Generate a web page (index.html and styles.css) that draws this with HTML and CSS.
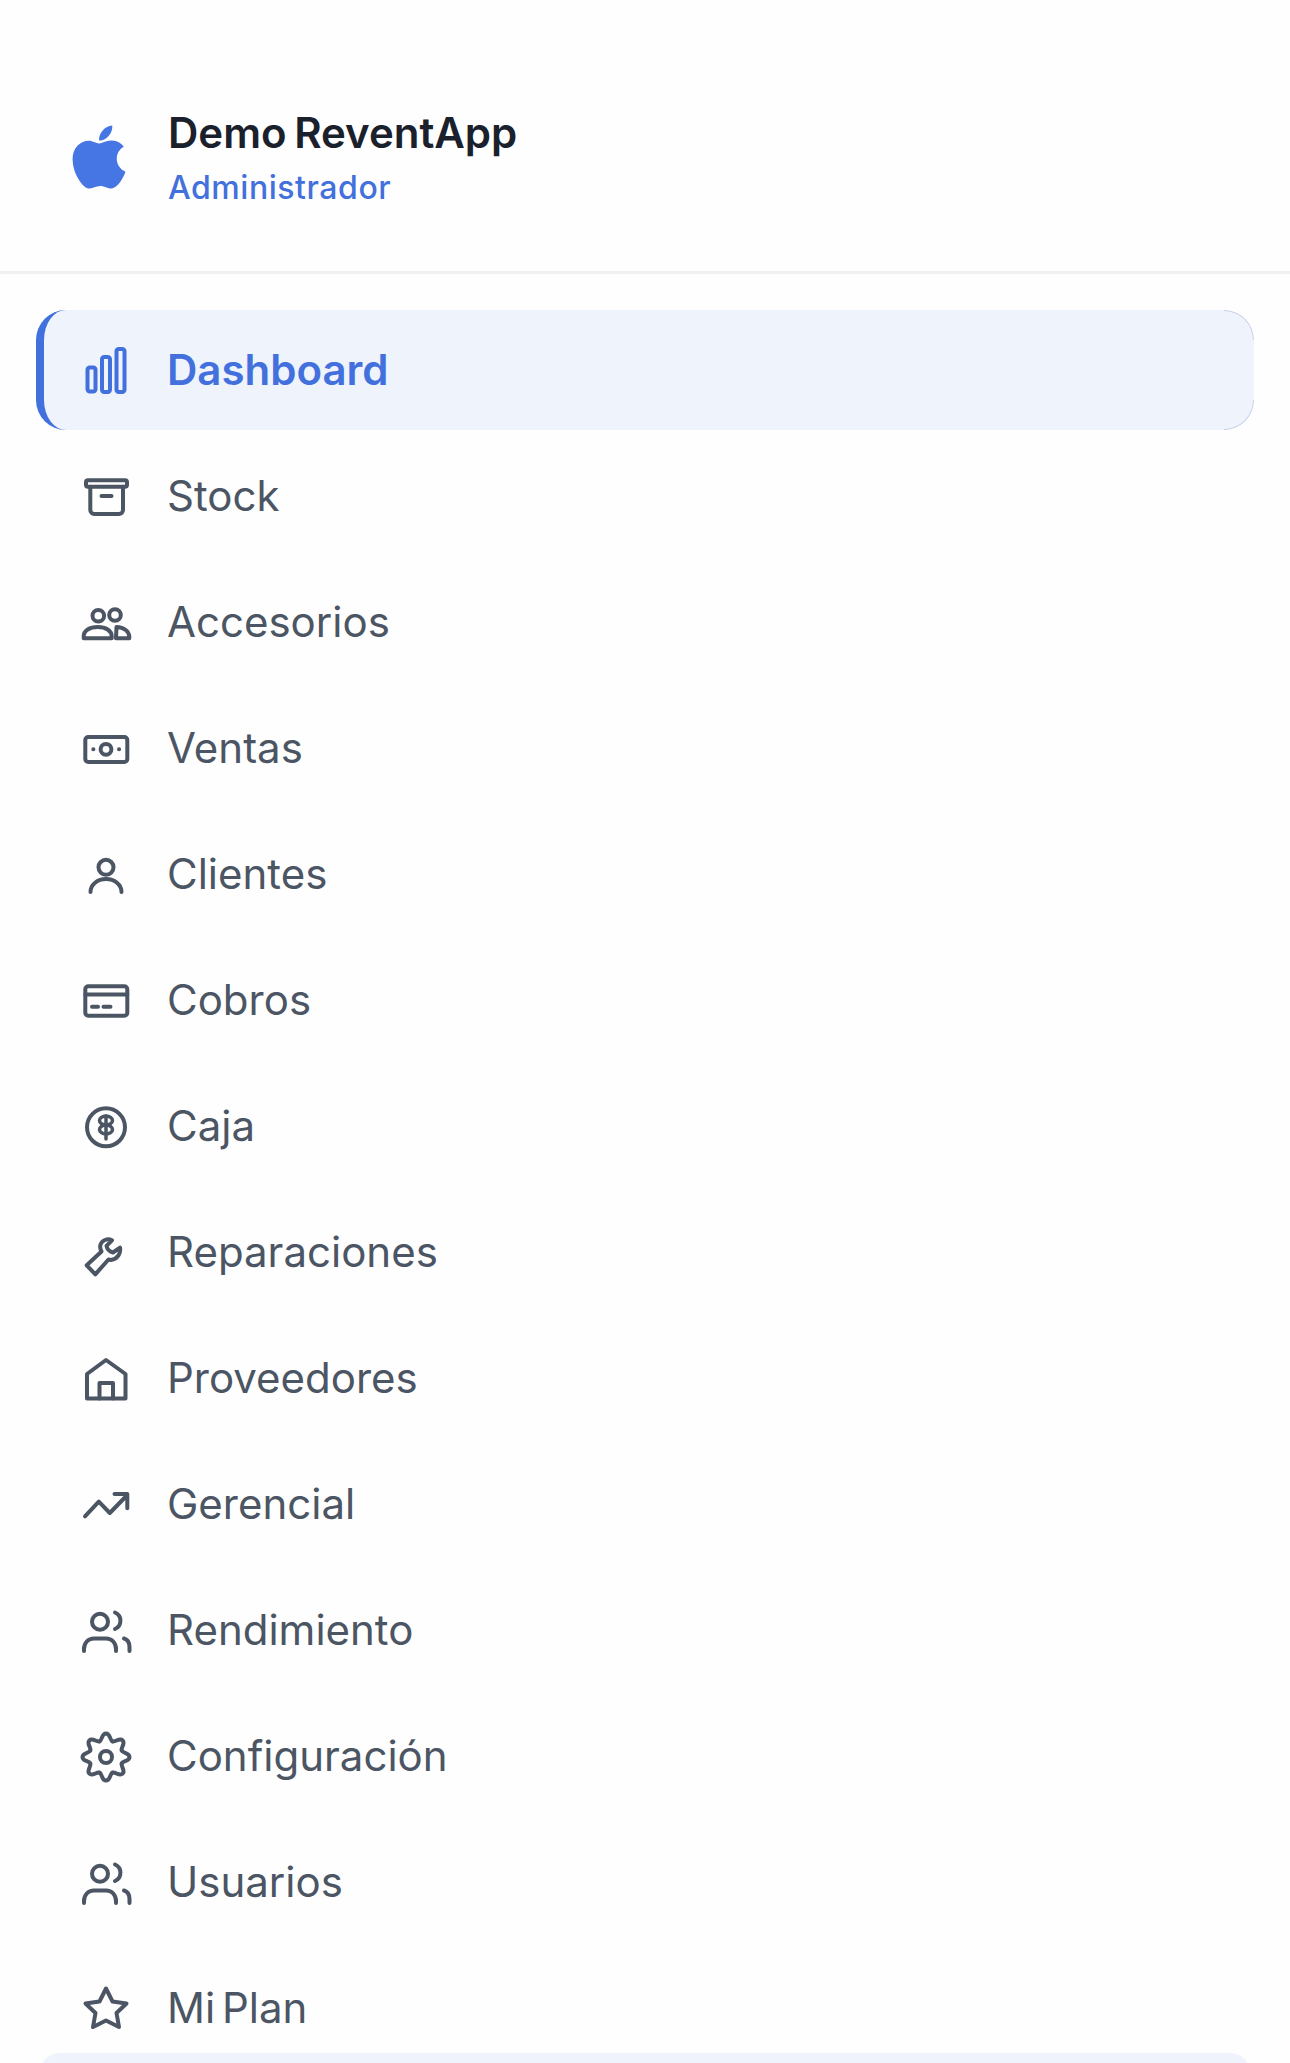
FILE: index.html
```html
<!DOCTYPE html>
<html lang="es">
<head>
<meta charset="utf-8">
<title>Demo ReventApp</title>
<link rel="stylesheet" href="styles.css">
</head>
<body>
<aside class="sidebar">
  <header class="brand">
    <svg class="brand-logo" viewBox="0 0 384 512" aria-hidden="true"><path d="M318.7 268.7c-.2-36.7 16.4-64.4 50-84.8-18.8-26.9-47.2-41.7-84.7-44.6-35.5-2.8-74.3 20.7-88.5 20.7-15 0-49.4-19.7-76.4-19.7C63.3 141.2 4 184.8 4 273.5q0 39.3 14.4 81.2c12.8 36.7 59 126.7 107.2 125.2 25.2-.6 43-17.9 75.8-17.9 31.8 0 48.3 17.9 76.4 17.9 48.6-.7 90.4-82.5 102.6-119.3-65.2-30.7-61.7-90-61.7-91.9zm-56.6-164.2c27.3-32.4 24.8-61.9 24-72.5-24.1 1.4-52 16.4-67.9 34.9-17.5 19.8-27.8 44.3-25.6 71.9 26.1 2 49.9-11.4 69.5-34.3z"/></svg>
    <div class="brand-text">
      <div class="brand-name">Demo ReventApp</div>
      <div class="brand-role">Administrador</div>
    </div>
  </header>
  <nav class="menu">
    <a class="item active">
      <svg class="ico" viewBox="0 0 54 54"><rect x="8.5" y="24.5" width="8" height="24" rx="2.2"/><rect x="23" y="14" width="8" height="35" rx="2.2"/><rect x="37.5" y="6" width="8" height="43" rx="2.2"/></svg>
      <span>Dashboard</span>
    </a>
    <a class="item">
      <svg class="ico" viewBox="0 0 54 54"><rect x="7" y="11.3" width="41" height="6.5" rx="2"/><path d="M11.3 17.8V41a4 4 0 0 0 4 4H40a4 4 0 0 0 4-4V17.8"/><path d="M22.5 27h10"/></svg>
      <span>Stock</span>
    </a>
    <a class="item">
      <svg class="ico" viewBox="0 0 54 54"><circle cx="19.3" cy="20.7" r="5.8"/><circle cx="36" cy="20" r="5.8"/><path d="M4.7 43.2v-1.7c0-6 6-9.5 14-9.5s14 3.5 14 9.500v1.700z"/><path d="M37.500 32c7.500.3 12.800 4.300 12.800 10v1.200H37z"/></svg>
      <span>Accesorios</span>
    </a>
    <a class="item">
      <svg class="ico" viewBox="0 0 54 54"><rect x="6.3" y="16" width="42" height="25" rx="3"/><circle cx="27" cy="28.3" r="5.4"/><path d="M14.3 28.3h.1M40 28.3h.1"/></svg>
      <span>Ventas</span>
    </a>
    <a class="item">
      <svg class="ico" viewBox="0 0 54 54"><circle cx="27" cy="20.3" r="7.5"/><path d="M11.5 45c0-7.500 7-13 15.500-13s15.500 5.500 15.500 13"/></svg>
      <span>Clientes</span>
    </a>
    <a class="item">
      <svg class="ico" viewBox="0 0 54 54"><rect x="6.300" y="13.300" width="42" height="29.400" rx="3"/><path d="M6.300 21.500h42M13 33.700h6M24.500 33.700h7"/></svg>
      <span>Cobros</span>
    </a>
    <a class="item">
      <svg class="ico" viewBox="0 0 54 54"><circle cx="27" cy="28.300" r="19"/><ellipse class="thin" cx="27" cy="21.500" rx="6.500" ry="4.500"/><ellipse class="thin" cx="27" cy="30.500" rx="6.500" ry="4.500"/><path class="thin" d="M27 17v23"/></svg>
      <span>Caja</span>
    </a>
    <a class="item">
      <svg class="ico" viewBox="0 0 54 54"><path d="M7.700 40.300 22.500 26.500C20 22 21 17 26 15c2.500-1 5-.7 7 .3l-5.500 5.500c.5 3.200 2.500 5.700 6.500 6.700l7-4.800c1 5.300-2 11.300-9 12.300l-2.500-.5-13.200 14.800z"/></svg>
      <span>Reparaciones</span>
    </a>
    <a class="item">
      <svg class="ico" viewBox="0 0 54 54"><path d="M8 47.500V23L27 9l19.500 14v24.500z"/><path d="M20.500 47.500V32H34v15.500"/></svg>
      <span>Proveedores</span>
    </a>
    <a class="item">
      <svg class="ico" viewBox="0 0 54 54"><path d="M6 39.300 19.800 24.700 30.800 36 48.300 18M35.500 17h12.800v14.300"/></svg>
      <span>Gerencial</span>
    </a>
    <a class="item">
      <svg class="ico" viewBox="0 0 54 54"><circle cx="21" cy="18.700" r="8"/><path d="M36 9.500a9 9 0 0 1 0 16.500"/><path d="M5 48v-2c0-6 4-10.500 10-10.500h12c6 0 10 4.500 10 10.500v2"/><path d="M45 35.500c3.500 1 5.500 4.500 5.500 8.500v4"/></svg>
      <span>Rendimiento</span>
    </a>
    <a class="item">
      <svg class="ico" viewBox="0 0 54 54"><circle cx="27" cy="28" r="6"/><g><path d="M20.500 12.300C23.300 11.200 22.500 4.500 27 4.500S30.700 11.200 33.500 12.300"/><path transform="rotate(45 27 28)" d="M20.500 12.300C23.300 11.200 22.500 4.500 27 4.500S30.700 11.200 33.500 12.300"/><path transform="rotate(90 27 28)" d="M20.500 12.300C23.300 11.200 22.500 4.500 27 4.500S30.700 11.200 33.500 12.300"/><path transform="rotate(135 27 28)" d="M20.500 12.300C23.300 11.200 22.500 4.500 27 4.500S30.700 11.200 33.500 12.300"/><path transform="rotate(180 27 28)" d="M20.500 12.300C23.300 11.200 22.500 4.500 27 4.500S30.700 11.200 33.500 12.300"/><path transform="rotate(225 27 28)" d="M20.500 12.300C23.300 11.200 22.500 4.500 27 4.500S30.700 11.200 33.500 12.300"/><path transform="rotate(270 27 28)" d="M20.500 12.300C23.300 11.200 22.500 4.500 27 4.500S30.700 11.200 33.500 12.300"/><path transform="rotate(315 27 28)" d="M20.500 12.300C23.300 11.200 22.500 4.500 27 4.500S30.700 11.200 33.500 12.300"/></g></svg>
      <span>Configuración</span>
    </a>
    <a class="item">
      <svg class="ico" viewBox="0 0 54 54"><circle cx="21" cy="18.700" r="8"/><path d="M36 9.500a9 9 0 0 1 0 16.500"/><path d="M5 48v-2c0-6 4-10.500 10-10.500h12c6 0 10 4.500 10 10.500v2"/><path d="M45 35.500c3.500 1 5.500 4.500 5.500 8.500v4"/></svg>
      <span>Usuarios</span>
    </a>
    <a class="item">
      <svg class="ico" viewBox="0 0 54 54"><path d="M27 7.500l6.500 13 14 2-10 9.500L40 46l-13-6.500L14 46l2.500-14-10-9.500 14-2z"/></svg>
      <span>Mi Plan</span>
    </a>
  </nav>
  <div class="footer-card"></div>
</aside>
</body>
</html>
```

FILE: styles.css
```css
html, body {
  margin: 0;
  padding: 0;
  height: 100%;
  overflow: hidden;
  background: #fefefe;
}

.sidebar {
  position: relative;
  height: 2063px;
  overflow: hidden;
  font-family: "Inter", "Liberation Sans", sans-serif;
}

.brand {
  display: flex;
  align-items: center;
  gap: 42px;
  height: 271px;
  padding: 0 0 0 72px;
  box-sizing: content-box;
  border-bottom: 3px solid #eef0f2;
}

.brand-logo {
  flex: none;
  width: 54px;
  height: 72px;
  margin-top: 42px;
  fill: #4675e4;
}

.brand-text {
  display: flex;
  flex-direction: column;
  gap: 9px;
  margin-top: 43px;
}

.brand-name {
  font-size: 42px;
  line-height: 52px;
  font-weight: 600;
  word-spacing: -3px;
  color: #1a202c;
}

.brand-role {
  font-size: 32px;
  line-height: 40px;
  font-weight: 500;
  letter-spacing: 0.55px;
  color: #4270dc;
}

.menu {
  display: flex;
  flex-direction: column;
  gap: 6px;
  padding: 36px 36px 0;
}

.item {
  position: relative;
  display: flex;
  align-items: center;
  gap: 34px;
  height: 120px;
  flex: none;
  padding-left: 35px;
  box-sizing: border-box;
  border-left: 8px solid transparent;
  border-radius: 30px;
  font-size: 42px;
  font-weight: 400;
  word-spacing: -5px;
  color: #4b5563;
}

.item span {
  padding-bottom: 2px;
}

.item.active {
  border-left-color: #4270dc;
  background: #eef3fc;
  color: #4270dc;
  font-weight: 600;
}

.item.active::after {
  content: "";
  position: absolute;
  top: 0;
  right: 0;
  bottom: 0;
  width: 30px;
  box-sizing: border-box;
  border: 1px solid #c8cee4;
  border-left: 0;
  border-radius: 0 30px 30px 0;
  -webkit-mask: linear-gradient(#000 30px, transparent 30px, transparent 90px, #000 90px);
  mask: linear-gradient(#000 30px, transparent 30px, transparent 90px, #000 90px);
}

.ico {
  flex: none;
  width: 54px;
  height: 54px;
  fill: none;
  stroke: currentColor;
  stroke-width: 4;
  stroke-linecap: round;
  stroke-linejoin: round;
}

.ico .thin {
  stroke-width: 3.5;
}

.footer-card {
  position: absolute;
  left: 40px;
  right: 40px;
  bottom: -30px;
  height: 40px;
  border-radius: 30px;
  background: #eef3fc;
}
```
